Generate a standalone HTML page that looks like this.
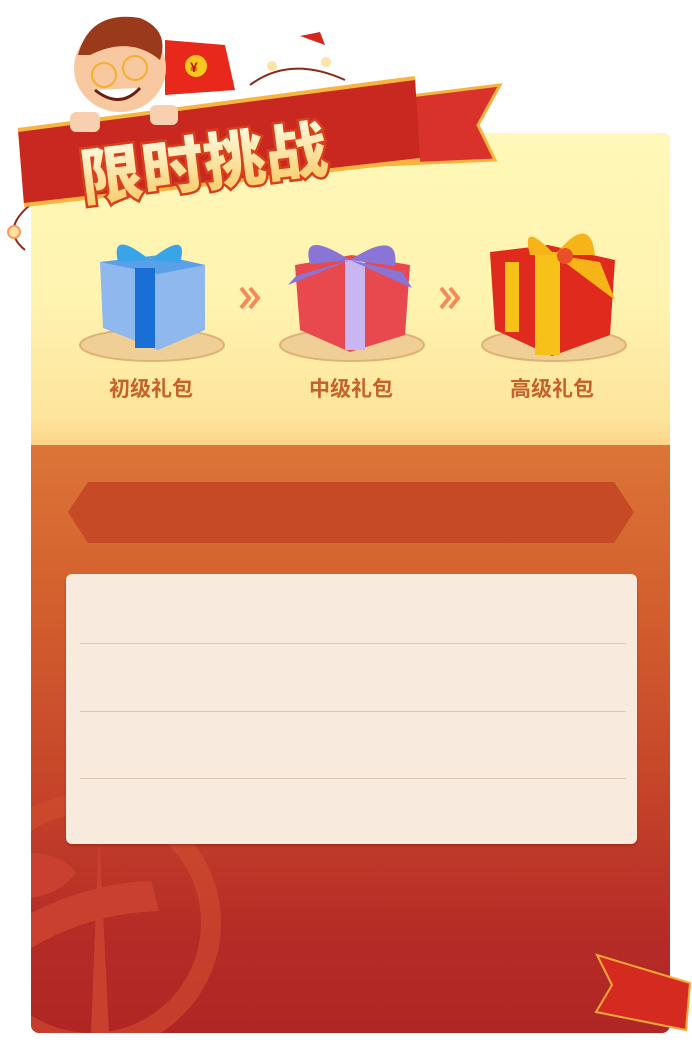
<!DOCTYPE html>
<html><head><meta charset="utf-8"><style>
html,body{margin:0;padding:0;background:#fff;}
body{width:692px;height:1045px;position:relative;overflow:hidden;font-family:"Liberation Sans","Noto Sans CJK SC",sans-serif;}
.card{position:absolute;left:31px;top:133px;width:639px;height:900px;border-radius:8px;overflow:hidden;
background:linear-gradient(#dd7a3a 0px,#dc7537 312px,#d4622f 450px,#c7472a 640px,#b52b26 800px,#b02624 900px);}
.top{position:absolute;left:0;top:0;width:639px;height:312px;background:linear-gradient(#fff8b8 0%,#fff3b0 55%,#fde49a 92%,#fbd58a 100%);}
.lbl{position:absolute;top:240px;font-size:21px;font-weight:bold;color:#c4622a;width:140px;text-align:center;}
.hex{position:absolute;left:68px;top:482px;width:566px;height:61px;background:#c54a25;clip-path:polygon(20px 0,546px 0,566px 30px,546px 61px,20px 61px,0 30px);}
.panel{position:absolute;left:66px;top:574px;width:571px;height:270px;background:#f8eadd;border-radius:6px;box-shadow:0 2px 2px rgba(130,30,10,.45);}
.ln{position:absolute;left:14px;width:546px;height:1px;background:#dfc8b3;}
</style></head><body>
<div class="card">
 <div class="top"></div>
 <svg style="position:absolute;left:0;top:640px" width="260" height="260">
  <circle cx="60" cy="150" r="120" fill="none" stroke="#d14f30" stroke-width="20" opacity=".6"/>
  <path d="M68 60 L78 260 L60 260 Z" fill="#c9412e"/>
  <path d="M0 140 Q60 110 120 108 L128 138 Q60 140 0 175Z" fill="#c9412e"/>
  <path d="M0 80 Q30 80 45 100 Q30 120 0 125Z" fill="#c9412e"/>
 </svg>
 <div class="lbl" style="left:50px">初级礼包</div>
 <div class="lbl" style="left:250px">中级礼包</div>
 <div class="lbl" style="left:451px">高级礼包</div>
</div>
<svg style="position:absolute;left:0;top:0" width="692" height="1045">
 <defs>
  <linearGradient id="tg" x1="0" y1="0" x2="0" y2="1"><stop offset="0" stop-color="#fffbe0"/><stop offset="1" stop-color="#f8c860"/></linearGradient>
 </defs>
 <g fill="#f0cf97" stroke="#deb274" stroke-width="2">
  <ellipse cx="152" cy="345" rx="72" ry="16"/><ellipse cx="352" cy="345" rx="72" ry="16"/><ellipse cx="554" cy="345" rx="72" ry="16"/>
 </g>
 <!-- blue gift -->
 <polygon points="100,262 160,255 205,265 205,330 158,350 103,328" fill="#8fb8ee"/>
 <polygon points="100,262 158,274 205,265 160,255" fill="#5aa0e8"/>
 <rect x="135" y="268" width="20" height="80" fill="#1a6fd6"/>
 <path d="M150 260 Q110 228 118 262 Z M150 260 Q190 228 180 263Z" fill="#3aa4e8"/>
 <!-- red gift -->
 <polygon points="295,265 352,255 410,265 405,335 350,352 300,330" fill="#e8494f"/>
 <rect x="345" y="260" width="20" height="90" fill="#c9b6f0"/>
 <path d="M350 260 Q300 228 310 264Z M350 260 Q400 228 395 266Z M350 260 L288 285 L296 276Z M350 260 L412 288 L402 272Z" fill="#8a74d6"/>
 <!-- gold gift -->
 <polygon points="490,252 548,245 615,260 610,335 552,356 495,330" fill="#e02a1e"/>
 <rect x="535" y="252" width="25" height="103" fill="#f6c21a"/>
 <rect x="505" y="262" width="14" height="70" fill="#f6c21a"/>
 <path d="M555 255 Q520 218 530 255Z M555 255 Q590 212 595 255Z M555 255 L615 300 L600 262Z" fill="#f7b418"/>
 <circle cx="565" cy="256" r="8" fill="#e9502a"/>
 <g fill="none" stroke="#f48a5a" stroke-width="4">
  <path d="M241 288 l8 10 l-8 10 M250 288 l8 10 l-8 10"/>
  <path d="M441 288 l8 10 l-8 10 M450 288 l8 10 l-8 10"/>
 </g>
 <path d="M30 205 Q0 230 25 250" fill="none" stroke="#8a2a1a" stroke-width="2"/>
 <circle cx="14" cy="232" r="6" fill="#ffe2a8" stroke="#ff9a55" stroke-width="2"/>
 <path d="M250 85 Q290 55 345 80" fill="none" stroke="#8a2a1a" stroke-width="2"/>
 <circle cx="272" cy="66" r="5" fill="#ffe2a8"/><circle cx="326" cy="62" r="5" fill="#ffe2a8"/>
 <path d="M378 100 L500 85 L478 125 L495 160 L380 165 Z" fill="#d8322a" stroke="#f5b340" stroke-width="3"/>
 <path d="M18 130 L415 78 L420 160 L24 205 Z" fill="#c8281f"/>
 <path d="M18 130 L415 78" stroke="#f8b440" stroke-width="4"/>
 <path d="M24 205 L420 160" stroke="#f8b440" stroke-width="4"/>
 <path d="M165 40 L225 45 L235 90 L165 95Z" fill="#e8281a"/>
 <circle cx="196" cy="66" r="11" fill="#f8c81e"/>
 <text x="190" y="72" font-size="14" font-weight="bold" fill="#b81a10">¥</text>
 <path d="M300 36 L320 32 L325 45 Z" fill="#d4281f"/>
 <ellipse cx="120" cy="68" rx="46" ry="44" fill="#f8c8a0"/>
 <path d="M78 55 Q90 10 140 18 Q170 30 160 60 Q130 35 90 55Z" fill="#9a3a1a"/>
 <circle cx="104" cy="75" r="12" fill="none" stroke="#f0b030" stroke-width="2"/>
 <circle cx="135" cy="68" r="12" fill="none" stroke="#f0b030" stroke-width="2"/>
 <path d="M95 90 Q120 110 140 88" fill="#fff" stroke="#6a2010" stroke-width="3"/>
 <rect x="70" y="112" width="30" height="20" rx="6" fill="#f8d0b0"/>
 <rect x="150" y="105" width="28" height="20" rx="6" fill="#f8d0b0"/>
 <text x="78" y="186" font-size="62" font-weight="900" fill="url(#tg)" stroke="#d8401c" stroke-width="5" paint-order="stroke" transform="rotate(-7 200 150)" font-family="Liberation Sans,Noto Sans CJK SC,sans-serif">限时挑战</text>
 <path d="M597 955 L690 983 L686 1030 L596 1012 L612 985 Z" fill="#d52a20" stroke="#f5a83a" stroke-width="2"/>
</svg>
<div class="hex"></div>
<div class="panel">
 <div class="ln" style="top:69px"></div>
 <div class="ln" style="top:137px"></div>
 <div class="ln" style="top:204px"></div>
</div>
</body></html>
